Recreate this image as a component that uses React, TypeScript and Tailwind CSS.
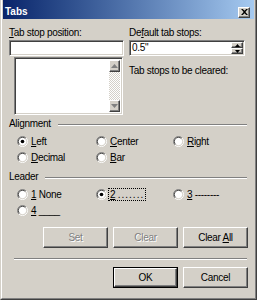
import type { ReactNode } from 'react';

const raised =
    'border border-t-white border-l-white border-r-[#404040] border-b-[#404040] shadow-[inset_-1px_-1px_#808080,inset_1px_1px_#d4d0c8]';
const sunken =
    'border border-t-[#808080] border-l-[#808080] border-r-white border-b-white shadow-[inset_1px_1px_#404040,inset_-1px_-1px_#d4d0c8]';

const Radio = ({ checked }: { checked?: boolean }) => (
    <svg width="11" height="11" viewBox="0 0 12 12" className="shrink-0">
        <circle cx="6" cy="6" r="4.5" fill="#fff" />
        <path d="M2.1 9.9A5.5 5.5 0 0 1 9.9 2.1" fill="none" stroke="#808080" />
        <path d="M9.9 2.1A5.5 5.5 0 0 1 2.1 9.9" fill="none" stroke="#fff" />
        <path d="M2.8 9.2A4.5 4.5 0 0 1 9.2 2.8" fill="none" stroke="#404040" />
        <path d="M9.2 2.8A4.5 4.5 0 0 1 2.8 9.2" fill="none" stroke="#d4d0c8" />
        {checked && <circle cx="6" cy="6" r="2" fill="#000" />}
    </svg>
);

const RadioItem = ({ checked, focused, children }: { checked?: boolean; focused?: boolean; children: ReactNode }) => (
    <div className="flex items-center h-[12px]">
        <Radio checked={checked} />
        <span
            className={`ml-[1px] px-px leading-[11px] border whitespace-pre ${
                focused ? 'border-dotted border-black' : 'border-transparent'
            }`}
        >
            {children}
        </span>
    </div>
);

const GroupHeader = ({ children }: { children: ReactNode }) => (
    <div className="flex items-start h-[12px]">
        <span>{children}</span>
        <div className="flex-1 ml-[7px] mr-px mt-[6px] h-[2px] border-t border-b border-t-[#808080] border-b-white" />
    </div>
);

const Button = ({ children, disabled, isDefault }: { children: ReactNode; disabled?: boolean; isDefault?: boolean }) => (
    <div className={`w-[65px] h-[21px] ${isDefault ? 'border border-black' : ''}`}>
        <div
            className={`w-full h-full flex items-center justify-center ${raised} ${
                disabled ? 'text-[#808080] [text-shadow:1px_1px_#fff]' : ''
            }`}
        >
            <span className="whitespace-pre">{children}</span>
        </div>
    </div>
);

const Arrow = ({ up, color = '#808080' }: { up?: boolean; color?: string }) => (
    <svg width="7" height="4" viewBox="0 0 7 4">
        <path d={up ? 'M3.5 0L7 4H0z' : 'M0 0h7L3.5 4z'} fill={color} />
    </svg>
);

const TitleBar = () => (
    <div className="h-[19px] pt-[5px] pl-[2px] pr-[4px] flex items-center justify-between bg-linear-to-r from-[#0a246a] to-[#a6caf0]">
        <span className="text-white font-bold text-[10px] tracking-normal">Tabs</span>
        <div className={`w-[12px] h-[11px] flex items-center justify-center bg-[#d4d0c8] ${raised}`}>
            <svg width="7" height="6" viewBox="0 0 8 7">
                <path d="M0 0h2l2 2 2-2h2L5 3.5 8 7H6L4 5 2 7H0l3-3.5z" fill="#000" />
            </svg>
        </div>
    </div>
);

export default function App() {
    return (
        <div className="w-[257px] h-[300px] bg-[#d4d0c8] border-l border-r border-b border-l-[#d4d0c8] border-r-[#404040] border-b-[#404040] font-['Liberation_Sans',sans-serif] text-[10px] tracking-[-0.3px] leading-[12px] text-black select-none">
            <div className="h-full flex flex-col border-l border-r border-b border-l-white border-r-[#808080] border-b-[#808080] px-px">
                <TitleBar />
                <div className="flex flex-col px-[6px]">
                    {/* positions */}
                    <div className="flex gap-[5px] mt-[8px]">
                        <div className="w-[115px] flex flex-col">
                            <span className="h-[12px]">
                                <u>T</u>ab stop position:
                            </span>
                            <div className={`mt-px h-[16px] bg-white ${sunken}`} />
                            <div className={`ml-[5px] w-[109px] mt-px h-[58px] bg-white flex justify-end p-[2px] ${sunken}`}>
                                <div className="w-[11px] flex flex-col bg-[repeating-conic-gradient(#d4d0c8_0_25%,#fff_0_50%)] bg-[length:2px_2px]">
                                    <div className={`h-[12px] bg-[#d4d0c8] flex items-center justify-center ${raised}`}>
                                        <Arrow up />
                                    </div>
                                    <div className="flex-1" />
                                    <div className={`h-[12px] bg-[#d4d0c8] flex items-center justify-center ${raised}`}>
                                        <Arrow />
                                    </div>
                                </div>
                            </div>
                        </div>
                        <div className="w-[116px] flex flex-col">
                            <span className="h-[12px]">
                                De<u>f</u>ault tab stops:
                            </span>
                            <div className={`mt-px h-[16px] bg-white flex items-center justify-between pl-[2px] pr-px ${sunken}`}>
                                <span className="leading-[10px]">0.5"</span>
                                <div className="flex flex-col w-[12px] h-[12px]">
                                    <div className={`h-[6px] bg-[#d4d0c8] flex items-center justify-center ${raised}`}>
                                        <svg width="5" height="3" viewBox="0 0 5 3">
                                            <path d="M2.5 0L5 3H0z" fill="#000" />
                                        </svg>
                                    </div>
                                    <div className={`h-[6px] bg-[#d4d0c8] flex items-center justify-center ${raised}`}>
                                        <svg width="5" height="3" viewBox="0 0 5 3">
                                            <path d="M0 0h5L2.5 3z" fill="#000" />
                                        </svg>
                                    </div>
                                </div>
                            </div>
                            <span className="mt-[9px]">Tab stops to be cleared:</span>
                        </div>
                    </div>

                    {/* alignment */}
                    <div className="mt-[3px]">
                        <GroupHeader>Alignment</GroupHeader>
                    </div>
                    <div className="mt-[5px] pl-[8px] grid grid-cols-[79px_77px_1fr] gap-y-[4px]">
                        <RadioItem checked>
                            <u>L</u>eft
                        </RadioItem>
                        <RadioItem>
                            <u>C</u>enter
                        </RadioItem>
                        <RadioItem>
                            <u>R</u>ight
                        </RadioItem>
                        <RadioItem>
                            <u>D</u>ecimal
                        </RadioItem>
                        <RadioItem>
                            <u>B</u>ar
                        </RadioItem>
                    </div>

                    {/* leader */}
                    <div className="mt-[8px]">
                        <GroupHeader>Leader</GroupHeader>
                    </div>
                    <div className="mt-[5px] pl-[8px] grid grid-cols-[79px_77px_1fr] gap-y-[4px]">
                        <RadioItem>
                            <u>1</u> None
                        </RadioItem>
                        <RadioItem checked focused>
                            <u>2</u> <span className="tracking-[1px]">.......</span>
                        </RadioItem>
                        <RadioItem>
                            <u>3</u> --------
                        </RadioItem>
                        <RadioItem>
                            <u>4</u> ____
                        </RadioItem>
                    </div>

                    {/* buttons */}
                    <div className="mt-[11px] flex justify-end gap-[5px]">
                        <Button disabled>Set</Button>
                        <Button disabled>Clear</Button>
                        <Button>
                            Clear <u>A</u>ll
                        </Button>
                    </div>
                    <div className="mt-[10px] ml-[5px] mr-px h-[2px] border-t border-b border-t-[#808080] border-b-white" />
                    <div className="mt-[7px] flex justify-end gap-[5px]">
                        <Button isDefault>OK</Button>
                        <Button>Cancel</Button>
                    </div>
                </div>
            </div>
        </div>
    );
}
